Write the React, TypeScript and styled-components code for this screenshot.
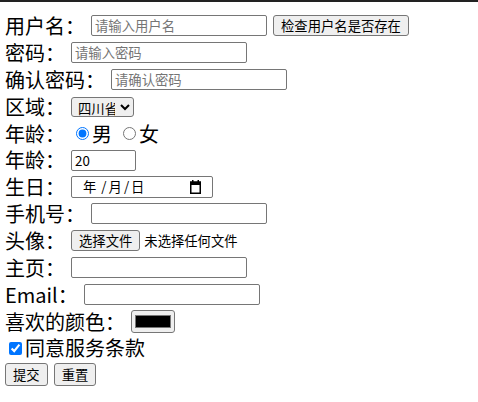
import React from "react";
import styled, { createGlobalStyle } from "styled-components";

const GlobalStyle = createGlobalStyle`
  body {
    margin: 0;
    background: #fff;
    font-family: "Noto Sans CJK SC", "Liberation Sans", sans-serif;
    color: #000;
  }
`;

const TopRule = styled.div`
  height: 2px;
  background: #222;
`;

const Form = styled.form`
  padding: 10px 5px 0;
`;

const Row = styled.div<{ $h?: number }>`
  display: flex;
  align-items: center;
  gap: 6px;
  height: ${(p) => p.$h ?? 27}px;
`;

const Label = styled.span`
  font-size: 20px;
  line-height: 24px;
  white-space: nowrap;
`;

const TextInput = styled.input<{ $w?: number }>`
  box-sizing: border-box;
  width: ${(p) => p.$w ?? 176}px;
  height: 21px;
  padding: 1px 3px;
  border: 1px solid #767676;
  border-radius: 2px;
  font-family: inherit;
  font-size: 13.33px;
  color: #000;
  &::placeholder {
    color: #757575;
  }
`;

const Button = styled.button<{ $h?: number; $px?: number }>`
  box-sizing: border-box;
  height: ${(p) => p.$h ?? 21}px;
  padding: 0 ${(p) => p.$px ?? 6}px;
  background: #efefef;
  border: 1px solid #767676;
  border-radius: 3px;
  font-family: inherit;
  font-size: 13.33px;
  color: #000;
  white-space: nowrap;
`;

const Select = styled.select`
  box-sizing: border-box;
  width: 63px;
  height: 20px;
  font-family: inherit;
  font-size: 13.33px;
  border: 1px solid #767676;
  border-radius: 3px;
  padding: 0 2px;
`;

const Option = styled.label`
  display: inline-flex;
  align-items: center;
  font-size: 20px;
  line-height: 24px;
`;

const Radio = styled.input`
  width: 13px;
  height: 13px;
  margin: 0 3px 0 5px;
  accent-color: #0075ff;
`;

const Check = styled.input`
  width: 13px;
  height: 13px;
  margin: 0 3px 0 4px;
  accent-color: #0075ff;
`;

const DateBox = styled.div`
  box-sizing: border-box;
  width: 142px;
  height: 22px;
  display: flex;
  align-items: center;
  padding: 0 11px 0 11px;
  border: 1px solid #767676;
  border-radius: 2px;
  font-size: 13.33px;
`;

const DatePart = styled.span<{ $mr?: number }>`
  margin-right: ${(p) => p.$mr ?? 2}px;
`;

const CalendarIcon = styled.svg`
  margin-left: auto;
`;

const FileNote = styled.span`
  font-size: 13.33px;
  margin-left: -2px;
`;

const ColorButton = styled.div`
  box-sizing: border-box;
  width: 44px;
  height: 23px;
  display: flex;
  align-items: center;
  justify-content: center;
  background: #efefef;
  border: 1px solid #767676;
  border-radius: 3px;
`;

const Swatch = styled.div`
  width: 34px;
  height: 11px;
  background: #000;
  border: 1px solid #777;
`;

const ButtonRow = styled.div`
  display: flex;
  align-items: center;
  gap: 6px;
  height: 26px;
`;

export default function App() {
  return (
    <>
      <GlobalStyle />
      <TopRule />
      <Form onSubmit={(e) => e.preventDefault()}>
        <Row>
          <Label>用户名：</Label>
          <TextInput placeholder="请输入用户名" />
          <Button type="button" $px={7}>检查用户名是否存在</Button>
        </Row>
        <Row>
          <Label>密码：</Label>
          <TextInput type="password" placeholder="请输入密码" />
        </Row>
        <Row>
          <Label>确认密码：</Label>
          <TextInput type="password" placeholder="请确认密码" />
        </Row>
        <Row>
          <Label>区域：</Label>
          <Select defaultValue="sc">
            <option value="sc">四川省</option>
          </Select>
        </Row>
        <Row>
          <Label>年龄：</Label>
          <Option>
            <Radio type="radio" name="sex" defaultChecked />男
          </Option>
          <Option>
            <Radio type="radio" name="sex" />女
          </Option>
        </Row>
        <Row $h={26}>
          <Label>年龄：</Label>
          <TextInput type="number" $w={65} defaultValue="20" />
        </Row>
        <Row>
          <Label>生日：</Label>
          <DateBox>
            <DatePart $mr={2}>年</DatePart>
            <DatePart $mr={2}>&nbsp;/</DatePart>
            <DatePart $mr={2}>月</DatePart>
            <DatePart $mr={2}>/</DatePart>
            <DatePart>日</DatePart>
            <CalendarIcon width="11" height="14" viewBox="0 0 11 14">
              <rect x="0.75" y="2.25" width="9.5" height="11" fill="none" stroke="#000" strokeWidth="1.5" />
              <rect x="0" y="1.5" width="11" height="3.5" fill="#000" />
              <rect x="2" y="0" width="1.5" height="2" fill="#000" />
              <rect x="7.5" y="0" width="1.5" height="2" fill="#000" />
            </CalendarIcon>
          </DateBox>
        </Row>
        <Row>
          <Label>手机号：</Label>
          <TextInput type="tel" />
        </Row>
        <Row>
          <Label>头像：</Label>
          <Button type="button" $px={7}>选择文件</Button>
          <FileNote>未选择任何文件</FileNote>
        </Row>
        <Row>
          <Label>主页：</Label>
          <TextInput type="url" />
        </Row>
        <Row>
          <Label>Email：</Label>
          <TextInput type="email" />
        </Row>
        <Row>
          <Label>喜欢的颜色：</Label>
          <ColorButton>
            <Swatch />
          </ColorButton>
        </Row>
        <Row $h={26}>
          <Option>
            <Check type="checkbox" defaultChecked />同意服务条款
          </Option>
        </Row>
        <ButtonRow>
          <Button type="submit" $h={23} $px={7}>提交</Button>
          <Button type="reset" $h={23} $px={7}>重置</Button>
        </ButtonRow>
      </Form>
    </>
  );
}
